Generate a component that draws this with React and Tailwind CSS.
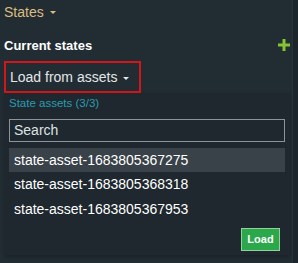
export default function App() {
  const items = ["state-asset-1683805367275", "state-asset-1683805368318", "state-asset-1683805367953"];
  return (
    <div className="w-[298px] h-[263px] bg-[#222c33] flex overflow-hidden" style={{ fontFamily: '"Liberation Sans", Arial, sans-serif' }}>
      <div className="w-[292px] flex flex-col pl-[4px]">
        <div className="flex items-center h-[16px] mt-[4px] text-[14px] leading-[16px] text-[#dcbc80]">
          <span>States</span>
          <span className="ml-[6px] mt-[1px] w-0 h-0 border-l-[3px] border-r-[3px] border-t-[3px] border-l-transparent border-r-transparent border-t-[#dcbc80]" />
        </div>
        <div className="flex items-center justify-between h-[16px] mt-[18px] pr-[2px]">
          <span className="text-[13px] font-bold leading-[16px] text-white">Current states</span>
          <svg width="12" height="12" viewBox="0 0 12 12" className="mt-[-2px]">
            <rect x="4.5" y="0" width="3" height="12" fill="#86c232" />
            <rect x="0" y="4.5" width="12" height="3" fill="#86c232" />
          </svg>
        </div>
        <div className="mt-[7px] w-[137px] h-[32px] border-2 border-[#d4161b] flex items-center pl-[4px] text-[14px] text-[#e4e6e8]">
          <span>Load from assets</span>
          <span className="ml-[6px] mt-[2px] w-0 h-0 border-l-[3px] border-r-[3px] border-t-[3px] border-l-transparent border-r-transparent border-t-[#e4e6e8]" />
        </div>
        <div className="ml-[1px] w-[285px] h-[162px] bg-[#1e282e] pl-[4px] pr-[5px] pt-[3px] flex flex-col shadow-[0_2px_4px_rgba(0,0,0,0.25)]">
          <div className="text-[11.5px] leading-[14px] text-[#2a9cb2]">State assets (3/3)</div>
          <div className="mt-[9px] h-[23px] border border-[#8a9499] flex items-center pl-[4px] text-[14px] text-[#dfe2e4]">Search</div>
          <div className="mt-[6px] flex flex-col">
            {items.map((t, i) => (
              <div key={t} className={(i === 0 ? "bg-[#394248] h-[24px] " : "h-[25px] ") + "flex items-center pl-[5px] text-[14px] text-white"}>{t}</div>
            ))}
          </div>
          <div className="mt-[6px] flex justify-end pr-[5px]">
            <div className="w-[39px] h-[23px] bg-[#2ba94a] border border-[#94cfa0] flex items-center justify-center text-[11px] font-bold text-white">Load</div>
          </div>
        </div>
      </div>
      <div className="w-[6px] h-full bg-[#1c252b] border-l border-[#283238]" />
    </div>
  );
}
